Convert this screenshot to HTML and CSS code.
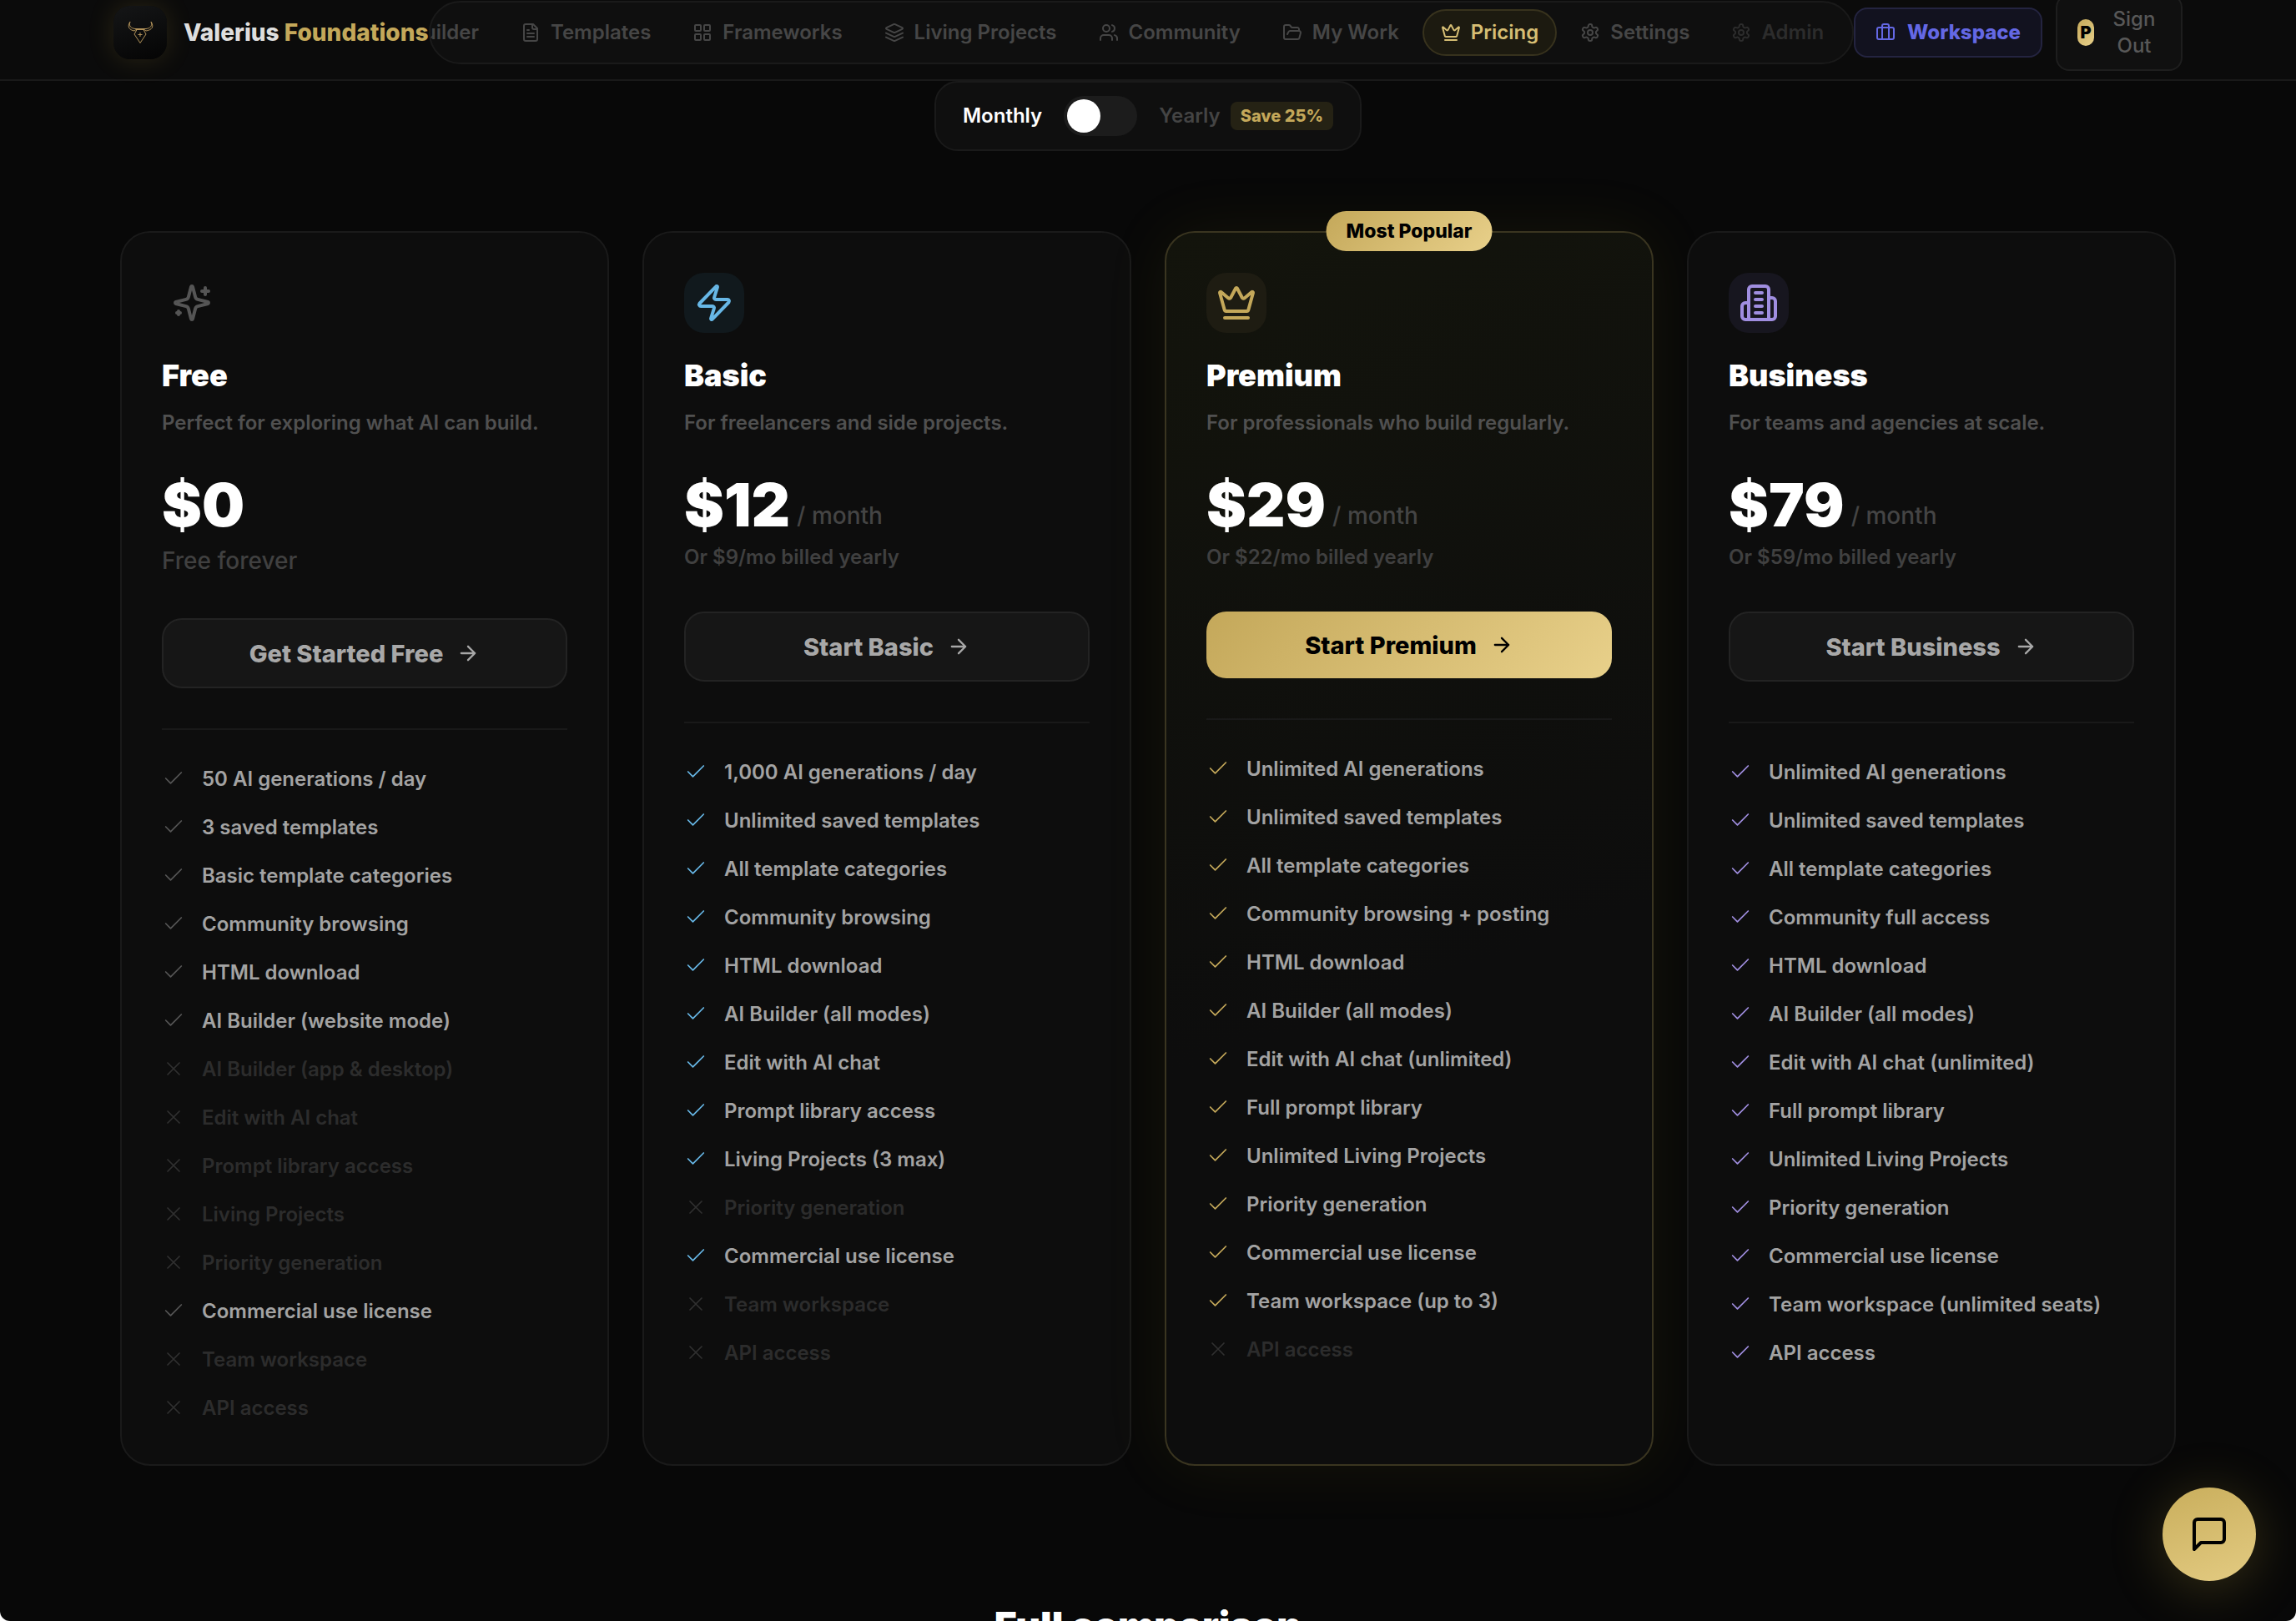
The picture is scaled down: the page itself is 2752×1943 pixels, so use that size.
FILE: index.html
```html
<!DOCTYPE html>
<html lang="en">
<head>
<meta charset="UTF-8">
<meta name="viewport" content="width=device-width, initial-scale=1.0">
<title>Pricing - Valerius Foundations</title>
<link rel="stylesheet" href="styles.css">
</head>
<body>

<svg class="sprite" aria-hidden="true">
    <symbol id="file" viewBox="0 0 24 24"><path d="M15 2H6a2 2 0 0 0-2 2v16a2 2 0 0 0 2 2h12a2 2 0 0 0 2-2V7Z"/><path d="M14 2v4a2 2 0 0 0 2 2h4M10 9H8M16 13H8M16 17H8"/></symbol>
    <symbol id="grid" viewBox="0 0 24 24"><rect x="3" y="3" width="7" height="7" rx="1"/><rect x="14" y="3" width="7" height="7" rx="1"/><rect x="14" y="14" width="7" height="7" rx="1"/><rect x="3" y="14" width="7" height="7" rx="1"/></symbol>
    <symbol id="layers" viewBox="0 0 24 24"><path d="M12.83 2.18a2 2 0 0 0-1.66 0L2.6 6.08a1 1 0 0 0 0 1.83l8.58 3.91a2 2 0 0 0 1.66 0l8.58-3.9a1 1 0 0 0 0-1.83Z"/><path d="M22 12.65l-9.17 4.16a2 2 0 0 1-1.66 0L2 12.65"/><path d="M22 17.65l-9.17 4.16a2 2 0 0 1-1.66 0L2 17.65"/></symbol>
    <symbol id="users" viewBox="0 0 24 24"><path d="M16 21v-2a4 4 0 0 0-4-4H6a4 4 0 0 0-4 4v2"/><circle cx="9" cy="7" r="4"/><path d="M22 21v-2a4 4 0 0 0-3-3.87M16 3.13a4 4 0 0 1 0 7.75"/></symbol>
    <symbol id="folder" viewBox="0 0 24 24"><path d="m6 14 1.5-2.9A2 2 0 0 1 9.24 10H20a2 2 0 0 1 1.94 2.5l-1.54 6a2 2 0 0 1-1.95 1.5H4a2 2 0 0 1-2-2V5a2 2 0 0 1 2-2h3.9a2 2 0 0 1 1.69.9l.81 1.2a2 2 0 0 0 1.67.9H18a2 2 0 0 1 2 2v2"/></symbol>
    <symbol id="crown" viewBox="0 0 24 24"><path d="M11.562 3.266a.5.5 0 0 1 .876 0L15.39 8.87a1 1 0 0 0 1.516.294L21.183 5.5a.5.5 0 0 1 .798.519l-2.834 10.246a1 1 0 0 1-.956.734H5.81a1 1 0 0 1-.957-.734L2.02 6.02a.5.5 0 0 1 .798-.519l4.276 3.664a1 1 0 0 0 1.516-.294z"/><path d="M5 21h14"/></symbol>
    <symbol id="gear" viewBox="0 0 24 24"><path d="M12.22 2h-.44a2 2 0 0 0-2 2v.18a2 2 0 0 1-1 1.73l-.43.25a2 2 0 0 1-2 0l-.15-.08a2 2 0 0 0-2.73.73l-.22.38a2 2 0 0 0 .73 2.73l.15.1a2 2 0 0 1 1 1.72v.51a2 2 0 0 1-1 1.74l-.15.09a2 2 0 0 0-.73 2.73l.22.38a2 2 0 0 0 2.73.73l.15-.08a2 2 0 0 1 2 0l.43.25a2 2 0 0 1 1 1.73V20a2 2 0 0 0 2 2h.44a2 2 0 0 0 2-2v-.18a2 2 0 0 1 1-1.73l.43-.25a2 2 0 0 1 2 0l.15.08a2 2 0 0 0 2.73-.73l.22-.39a2 2 0 0 0-.73-2.73l-.15-.08a2 2 0 0 1-1-1.74v-.5a2 2 0 0 1 1-1.74l.15-.09a2 2 0 0 0 .73-2.73l-.22-.38a2 2 0 0 0-2.73-.73l-.15.08a2 2 0 0 1-2 0l-.43-.25a2 2 0 0 1-1-1.73V4a2 2 0 0 0-2-2z"/><circle cx="12" cy="12" r="3"/></symbol>
    <symbol id="briefcase" viewBox="0 0 24 24"><path d="M16 20V4a2 2 0 0 0-2-2h-4a2 2 0 0 0-2 2v16"/><rect x="2" y="6" width="20" height="14" rx="2"/></symbol>
    <symbol id="sparkles" viewBox="0 0 24 24"><path d="M9.937 15.5A2 2 0 0 0 8.5 14.063l-6.135-1.582a.5.5 0 0 1 0-.962L8.5 9.936A2 2 0 0 0 9.937 8.5l1.582-6.135a.5.5 0 0 1 .963 0L14.063 8.5A2 2 0 0 0 15.5 9.937l6.135 1.581a.5.5 0 0 1 0 .964L15.5 14.063a2 2 0 0 0-1.437 1.437l-1.582 6.135a.5.5 0 0 1-.963 0z"/><path d="M20 3v4M22 5h-4M4 17v2M5 18H3"/></symbol>
    <symbol id="zap" viewBox="0 0 24 24"><path d="M4 14a1 1 0 0 1-.78-1.63l9.9-10.2a.5.5 0 0 1 .86.46l-1.92 6.02A1 1 0 0 0 13 10h7a1 1 0 0 1 .78 1.63l-9.9 10.2a.5.5 0 0 1-.86-.46l1.92-6.02A1 1 0 0 0 11 14z"/></symbol>
    <symbol id="building" viewBox="0 0 24 24"><path d="M6 22V4a2 2 0 0 1 2-2h8a2 2 0 0 1 2 2v18Z"/><path d="M6 12H4a2 2 0 0 0-2 2v6a2 2 0 0 0 2 2h2M18 9h2a2 2 0 0 1 2 2v9a2 2 0 0 1-2 2h-2M10 6h4M10 10h4M10 14h4M10 18h4"/></symbol>
    <symbol id="arrow" viewBox="0 0 24 24"><path d="M5 12h14M12 5l7 7-7 7"/></symbol>
    <symbol id="check" viewBox="0 0 24 24"><path d="M20 6 9 17l-5-5"/></symbol>
    <symbol id="cross" viewBox="0 0 24 24"><path d="M18 6 6 18M6 6l12 12"/></symbol>
    <symbol id="message" viewBox="0 0 24 24"><path d="M21 15a2 2 0 0 1-2 2H7l-4 4V5a2 2 0 0 1 2-2h14a2 2 0 0 1 2 2z"/></symbol>
</svg>

<header class="header">
    <div class="header-inner">
        <a class="brand" href="#">
            <span class="brand-logo">
                <svg viewBox="0 0 64 64" aria-hidden="true">
                    <path d="M20 19c-2 5 1 8 6 8.500h13c5-.5 8-3.500 6-8.500 4 6 1 10-6 11l-2-1.500H27L25 30c-6-1-9-5-5-11z"/>
                    <path d="M28 28.500l-3 5.500 7 10.500 7-10.500-3-5.500"/>
                    <path d="M32 32v5M29.500 34.500h5"/>
                </svg>
            </span>
            <span class="brand-name">Valerius <span class="gold">Foundations</span></span>
        </a>
        <nav class="nav">
            <a class="nav-link" href="#"><svg class="icon"><use href="#zap"/></svg>Builder</a>
            <a class="nav-link" href="#"><svg class="icon"><use href="#file"/></svg>Templates</a>
            <a class="nav-link" href="#"><svg class="icon"><use href="#grid"/></svg>Frameworks</a>
            <a class="nav-link" href="#"><svg class="icon"><use href="#layers"/></svg>Living Projects</a>
            <a class="nav-link" href="#"><svg class="icon"><use href="#users"/></svg>Community</a>
            <a class="nav-link" href="#"><svg class="icon"><use href="#folder"/></svg>My Work</a>
            <a class="nav-link active" href="#"><svg class="icon"><use href="#crown"/></svg>Pricing</a>
            <a class="nav-link" href="#"><svg class="icon"><use href="#gear"/></svg>Settings</a>
            <a class="nav-link dim" href="#"><svg class="icon"><use href="#gear"/></svg>Admin</a>
        </nav>
        <div class="actions">
            <a class="workspace" href="#"><svg class="icon"><use href="#briefcase"/></svg>Workspace</a>
            <button class="signout" type="button"><span class="avatar">P</span><span class="signout-text">Sign Out</span></button>
        </div>
    </div>
</header>

<main class="page">
    <div class="billing">
        <label class="billing-on" for="yearly">Monthly</label>
        <input class="switch" type="checkbox" role="switch" id="yearly">
        <label class="billing-off" for="yearly">Yearly <span class="save">Save 25%</span></label>
    </div>

    <section class="plans">
        <article class="plan free">
            <div class="plan-icon"><svg class="icon"><use href="#sparkles"/></svg></div>
            <h2>Free</h2>
            <p class="desc">Perfect for exploring what AI can build.</p>
            <div class="price"><strong>$0</strong></div>
            <p class="forever">Free forever</p>
            <button class="cta" type="button">Get Started Free <svg class="icon"><use href="#arrow"/></svg></button>
            <ul class="features">
                <li><svg class="icon"><use href="#check"/></svg>50 AI generations / day</li>
                <li><svg class="icon"><use href="#check"/></svg>3 saved templates</li>
                <li><svg class="icon"><use href="#check"/></svg>Basic template categories</li>
                <li><svg class="icon"><use href="#check"/></svg>Community browsing</li>
                <li><svg class="icon"><use href="#check"/></svg>HTML download</li>
                <li><svg class="icon"><use href="#check"/></svg>AI Builder (website mode)</li>
                <li class="off"><svg class="icon"><use href="#cross"/></svg>AI Builder (app &amp; desktop)</li>
                <li class="off"><svg class="icon"><use href="#cross"/></svg>Edit with AI chat</li>
                <li class="off"><svg class="icon"><use href="#cross"/></svg>Prompt library access</li>
                <li class="off"><svg class="icon"><use href="#cross"/></svg>Living Projects</li>
                <li class="off"><svg class="icon"><use href="#cross"/></svg>Priority generation</li>
                <li><svg class="icon"><use href="#check"/></svg>Commercial use license</li>
                <li class="off"><svg class="icon"><use href="#cross"/></svg>Team workspace</li>
                <li class="off"><svg class="icon"><use href="#cross"/></svg>API access</li>
            </ul>
        </article>

        <article class="plan basic">
            <div class="plan-icon"><svg class="icon"><use href="#zap"/></svg></div>
            <h2>Basic</h2>
            <p class="desc">For freelancers and side projects.</p>
            <div class="price"><strong>$12</strong><span>/ month</span></div>
            <p class="yearly">Or $9/mo billed yearly</p>
            <button class="cta" type="button">Start Basic <svg class="icon"><use href="#arrow"/></svg></button>
            <ul class="features">
                <li><svg class="icon"><use href="#check"/></svg>1,000 AI generations / day</li>
                <li><svg class="icon"><use href="#check"/></svg>Unlimited saved templates</li>
                <li><svg class="icon"><use href="#check"/></svg>All template categories</li>
                <li><svg class="icon"><use href="#check"/></svg>Community browsing</li>
                <li><svg class="icon"><use href="#check"/></svg>HTML download</li>
                <li><svg class="icon"><use href="#check"/></svg>AI Builder (all modes)</li>
                <li><svg class="icon"><use href="#check"/></svg>Edit with AI chat</li>
                <li><svg class="icon"><use href="#check"/></svg>Prompt library access</li>
                <li><svg class="icon"><use href="#check"/></svg>Living Projects (3 max)</li>
                <li class="off"><svg class="icon"><use href="#cross"/></svg>Priority generation</li>
                <li><svg class="icon"><use href="#check"/></svg>Commercial use license</li>
                <li class="off"><svg class="icon"><use href="#cross"/></svg>Team workspace</li>
                <li class="off"><svg class="icon"><use href="#cross"/></svg>API access</li>
            </ul>
        </article>

        <article class="plan premium">
            <span class="popular">Most Popular</span>
            <div class="plan-icon"><svg class="icon"><use href="#crown"/></svg></div>
            <h2>Premium</h2>
            <p class="desc">For professionals who build regularly.</p>
            <div class="price"><strong>$29</strong><span>/ month</span></div>
            <p class="yearly">Or $22/mo billed yearly</p>
            <button class="cta" type="button">Start Premium <svg class="icon"><use href="#arrow"/></svg></button>
            <ul class="features">
                <li><svg class="icon"><use href="#check"/></svg>Unlimited AI generations</li>
                <li><svg class="icon"><use href="#check"/></svg>Unlimited saved templates</li>
                <li><svg class="icon"><use href="#check"/></svg>All template categories</li>
                <li><svg class="icon"><use href="#check"/></svg>Community browsing + posting</li>
                <li><svg class="icon"><use href="#check"/></svg>HTML download</li>
                <li><svg class="icon"><use href="#check"/></svg>AI Builder (all modes)</li>
                <li><svg class="icon"><use href="#check"/></svg>Edit with AI chat (unlimited)</li>
                <li><svg class="icon"><use href="#check"/></svg>Full prompt library</li>
                <li><svg class="icon"><use href="#check"/></svg>Unlimited Living Projects</li>
                <li><svg class="icon"><use href="#check"/></svg>Priority generation</li>
                <li><svg class="icon"><use href="#check"/></svg>Commercial use license</li>
                <li><svg class="icon"><use href="#check"/></svg>Team workspace (up to 3)</li>
                <li class="off"><svg class="icon"><use href="#cross"/></svg>API access</li>
            </ul>
        </article>

        <article class="plan business">
            <div class="plan-icon"><svg class="icon"><use href="#building"/></svg></div>
            <h2>Business</h2>
            <p class="desc">For teams and agencies at scale.</p>
            <div class="price"><strong>$79</strong><span>/ month</span></div>
            <p class="yearly">Or $59/mo billed yearly</p>
            <button class="cta" type="button">Start Business <svg class="icon"><use href="#arrow"/></svg></button>
            <ul class="features">
                <li><svg class="icon"><use href="#check"/></svg>Unlimited AI generations</li>
                <li><svg class="icon"><use href="#check"/></svg>Unlimited saved templates</li>
                <li><svg class="icon"><use href="#check"/></svg>All template categories</li>
                <li><svg class="icon"><use href="#check"/></svg>Community full access</li>
                <li><svg class="icon"><use href="#check"/></svg>HTML download</li>
                <li><svg class="icon"><use href="#check"/></svg>AI Builder (all modes)</li>
                <li><svg class="icon"><use href="#check"/></svg>Edit with AI chat (unlimited)</li>
                <li><svg class="icon"><use href="#check"/></svg>Full prompt library</li>
                <li><svg class="icon"><use href="#check"/></svg>Unlimited Living Projects</li>
                <li><svg class="icon"><use href="#check"/></svg>Priority generation</li>
                <li><svg class="icon"><use href="#check"/></svg>Commercial use license</li>
                <li><svg class="icon"><use href="#check"/></svg>Team workspace (unlimited seats)</li>
                <li><svg class="icon"><use href="#check"/></svg>API access</li>
            </ul>
        </article>
    </section>

    <h2 class="compare-title">Full comparison</h2>
</main>

<button class="chat" type="button" aria-label="Open chat"><svg class="icon"><use href="#message"/></svg></button>

</body>
</html>
```

FILE: styles.css
```css
* {
    box-sizing: border-box;
}

html {
    height: 100%;
    overflow: hidden;
    background-color: #ffffff;
}

body {
    height: 100%;
    margin: 0;
    overflow: hidden;
    background-color: #080808;
    border-radius: 0 0 12px 12px;
    font-family: Inter, "Liberation Sans", sans-serif;
    font-size: 24px;
    font-weight: 600;
    line-height: 38px;
    color: #ffffff;
    -webkit-font-smoothing: antialiased;
}

h2, p, ul {
    margin: 0;
    padding: 0;
}

a {
    color: inherit;
    text-decoration: none;
}

button {
    font-family: inherit;
    cursor: pointer;
}

.sprite {
    display: none;
}

.icon {
    flex: none;
    width: 24px;
    height: 24px;
    fill: none;
    stroke: currentColor;
    stroke-width: 2;
    stroke-linecap: round;
    stroke-linejoin: round;
}

.gold {
    color: #c4a85a;
}

/* header */
.header {
    height: 97px;
    padding-bottom: 17px;
    background-color: #0b0b0b;
    border-bottom: 2px solid #191919;
}

.header-inner {
    display: flex;
    align-items: center;
    max-width: 2560px;
    height: 100%;
    margin: 0 auto;
    padding: 0 40px;
}

.brand {
    display: flex;
    flex: none;
    align-items: center;
    gap: 20px;
}

.brand-logo {
    width: 64px;
    height: 64px;
    border-radius: 20px;
    background: linear-gradient(160deg, #151617, #040404);
    box-shadow: 0 0 32px rgba(196, 168, 60, 0.16);
}

.brand-logo svg {
    display: block;
    fill: none;
    stroke: #b3935a;
    stroke-width: 1;
}

.brand-name {
    font-size: 28px;
    font-weight: 800;
    color: #dedede;
}

.nav {
    display: flex;
    flex: 1;
    justify-content: flex-end;
    gap: 6px;
    min-width: 0;
    padding: 8px 12px;
    overflow: hidden;
    background-color: #0f0f0f;
    border: 2px solid #1a1a1a;
    border-radius: 38px;
}

.nav-link {
    display: flex;
    flex: none;
    align-items: center;
    gap: 12px;
    height: 56px;
    padding: 0 20px;
    border: 2px solid transparent;
    border-radius: 28px;
    color: #464646;
}

.nav-link.active {
    background-color: #1c1a10;
    border-color: #37321d;
    color: #d6be74;
}

.nav-link.dim {
    color: #2c2c2c;
}

.actions {
    display: flex;
    flex: none;
    align-items: center;
    gap: 16px;
}

.workspace {
    display: flex;
    align-items: center;
    gap: 14px;
    height: 60px;
    padding: 0 24px;
    background-color: #12121f;
    border: 2px solid #242440;
    border-radius: 16px;
    font-weight: 800;
    color: #6468e4;
}

.signout {
    display: flex;
    align-items: center;
    gap: 16px;
    width: 152px;
    padding: 12px 24px;
    background-color: #101010;
    border: 2px solid #1e1e1e;
    border-radius: 16px;
    font-size: 24px;
    font-weight: 500;
    line-height: 32px;
    color: #585858;
}

.avatar {
    flex: none;
    width: 20px;
    height: 32px;
    border-radius: 10px;
    background: linear-gradient(135deg, #c4a85a, #e8d08a);
    font-size: 20px;
    font-weight: 900;
    color: #000000;
}

.signout-text {
    flex: 1;
}

/* monthly / yearly switch */
.page {
    max-width: 2560px;
    margin: 0 auto;
    padding: 0 48px;
}

.billing {
    display: flex;
    align-items: center;
    gap: 26px;
    width: fit-content;
    height: 84px;
    margin: 0 auto 96px;
    padding: 0 32px;
    background-color: #0f0f0f;
    border: 2px solid #1a1a1a;
    border-radius: 28px;
}

.switch {
    appearance: none;
    width: 88px;
    height: 48px;
    margin: 0;
    padding: 4px;
    background-color: #1c1c1c;
    border-radius: 24px;
    cursor: pointer;
}

.switch::before {
    content: "";
    display: block;
    width: 40px;
    height: 40px;
    border-radius: 50%;
    background-color: #ffffff;
}

.switch:checked::before {
    margin-left: auto;
}

.billing-off {
    display: flex;
    align-items: center;
    gap: 12px;
    color: #444444;
}

.save {
    padding: 0 12px;
    border-radius: 8px;
    background-color: #252214;
    font-size: 20px;
    font-weight: 800;
    line-height: 34px;
    color: #c4a85a;
}

/* plans */
.plans {
    display: grid;
    grid-template-columns: repeat(4, 1fr);
    gap: 40px;
}

.plan {
    position: relative;
    padding: 48px;
    background-color: #0d0d0d;
    border: 2px solid #1a1a1a;
    border-radius: 36px;
}

.plan-icon {
    display: flex;
    align-items: center;
    justify-content: center;
    width: 72px;
    height: 72px;
    margin-bottom: 29px;
    border-radius: 24px;
}

.plan-icon .icon {
    width: 48px;
    height: 48px;
}

.plan h2 {
    margin-bottom: 16px;
    font-size: 36px;
    font-weight: 900;
    line-height: 44px;
}

.desc {
    margin-bottom: 43px;
    color: #505050;
}

.price {
    display: flex;
    align-items: flex-end;
    gap: 8px;
    margin-bottom: 8px;
    font-size: 28px;
    font-weight: 500;
    line-height: 46px;
    color: #444444;
}

.price strong {
    font-size: 72px;
    font-weight: 900;
    line-height: 72px;
    color: #ffffff;
}

.forever,
.yearly {
    margin-bottom: 46px;
    color: #404040;
}

.forever {
    font-size: 28px;
    font-weight: 500;
    line-height: 46px;
}

.cta {
    display: flex;
    align-items: center;
    justify-content: center;
    gap: 16px;
    width: 100%;
    height: 84px;
    margin-bottom: 48px;
    background-color: #161616;
    border: 2px solid #232323;
    border-radius: 24px;
    font-size: 29px;
    font-weight: 800;
    color: #a8a8a8;
}

.cta .icon {
    width: 28px;
    height: 28px;
}

.features {
    display: flex;
    flex-direction: column;
    gap: 20px;
    padding-top: 40px;
    border-top: 2px solid #191919;
    list-style: none;
}

.features li {
    display: flex;
    gap: 20px;
    color: #a3a3a3;
}

.features .icon {
    width: 28px;
    height: 28px;
    margin-top: 4px;
    stroke-width: 1.5;
}

.features .off {
    color: #2c2c2c;
}

.free .icon {
    color: #555555;
}

.free .cta .icon {
    color: inherit;
}

.basic .plan-icon {
    background-color: #11191d;
}

.basic .plan-icon,
.basic .features .icon {
    color: #67b7e6;
}

.premium {
    background: linear-gradient(160deg, #13140c, #0d0d0d 60%);
    border-color: #3a3520;
    box-shadow: 0 0 80px rgba(196, 180, 40, 0.08);
}

.popular {
    position: absolute;
    top: -26px;
    left: 50%;
    transform: translateX(-50%);
    padding: 0 24px;
    border-radius: 24px;
    background: linear-gradient(135deg, #c4a85a, #e8d08a);
    font-size: 23px;
    font-weight: 800;
    line-height: 48px;
    white-space: nowrap;
    color: #000000;
}

.premium .plan-icon {
    background-color: #1e1c12;
}

.premium .plan-icon,
.premium .features .icon {
    color: #c4a85a;
}

.premium .cta {
    height: 80px;
    background: linear-gradient(135deg, #c4a85a, #e8d08a);
    border: none;
    color: #000000;
}

.business .plan-icon {
    background-color: #17161f;
}

.business .plan-icon,
.business .features .icon {
    color: #a08ee0;
}

.plan .features .off .icon {
    color: #303030;
}

.compare-title {
    margin-top: 160px;
    font-size: 46px;
    font-weight: 900;
    line-height: 62px;
    text-align: center;
}

/* chat button */
.chat {
    position: fixed;
    right: 48px;
    bottom: 48px;
    display: flex;
    align-items: center;
    justify-content: center;
    width: 112px;
    height: 112px;
    border: none;
    border-radius: 50%;
    background: linear-gradient(160deg, #c9ae5c, #e3cb82);
    box-shadow: 0 8px 64px rgba(196, 168, 60, 0.25);
    color: #000000;
}

.chat .icon {
    width: 48px;
    height: 48px;
}
```
